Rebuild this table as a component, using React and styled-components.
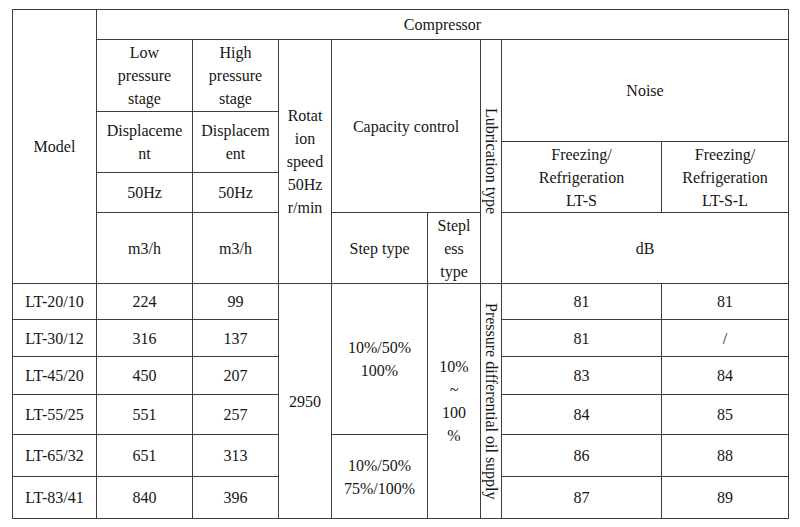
import React from 'react';
import styled, { createGlobalStyle } from 'styled-components';

// Estilo global: sem margem e fonte serifada com largura de Times
const GlobalStyle = createGlobalStyle`
  body {
    margin: 0;
    background: #ffffff;
    font-family: "Liberation Serif", "Times New Roman", serif;
    font-size: 16px;
    color: #161616;
  }
`;

// Dados das linhas do corpo da tabela
const modelos = [
  { nome: 'LT-20/10', baixa: '224', alta: '99', lts: '81', ltsl: '81' },
  { nome: 'LT-30/12', baixa: '316', alta: '137', lts: '81', ltsl: '/' },
  { nome: 'LT-45/20', baixa: '450', alta: '207', lts: '83', ltsl: '84' },
  { nome: 'LT-55/25', baixa: '551', alta: '257', lts: '84', ltsl: '85' },
  { nome: 'LT-65/32', baixa: '651', alta: '313', lts: '86', ltsl: '88' },
  { nome: 'LT-83/41', baixa: '840', alta: '396', lts: '87', ltsl: '89' },
];

const App = () => {
  return (
    <>
      <GlobalStyle />
      <Pagina>
        <Tabela>
          {/* Cabeçalho */}
          <Celula $col="1" $row="1 / 7">Model</Celula>
          <Celula $col="2 / 10" $row="1">Compressor</Celula>

          <Celula $col="2" $row="2">Low<br />pressure<br />stage</Celula>
          <Celula $col="3" $row="2">High<br />pressure<br />stage</Celula>
          <Celula $col="4" $row="2 / 7">Rotat<br />ion<br />speed<br />50Hz<br />r/min</Celula>
          <Celula $col="5 / 7" $row="2 / 6">Capacity control</Celula>
          <Celula $col="7" $row="2 / 7"><TextoVertical>Lubrication type</TextoVertical></Celula>
          <Celula $col="8 / 10" $row="2 / 4">Noise</Celula>

          <Celula $col="2" $row="3 / 5">Displaceme<br />nt</Celula>
          <Celula $col="3" $row="3 / 5">Displacem<br />ent</Celula>

          <Celula $col="8" $row="4 / 6">Freezing/<br />Refrigeration<br />LT-S</Celula>
          <Celula $col="9" $row="4 / 6">Freezing/<br />Refrigeration<br />LT-S-L</Celula>

          <Celula $col="2" $row="5">50Hz</Celula>
          <Celula $col="3" $row="5">50Hz</Celula>

          <Celula $col="2" $row="6">m3/h</Celula>
          <Celula $col="3" $row="6">m3/h</Celula>
          <Celula $col="5" $row="6">Step type</Celula>
          <Celula $col="6" $row="6">Stepl<br />ess<br />type</Celula>
          <Celula $col="8 / 10" $row="6">dB</Celula>

          {/* Corpo: uma linha por modelo */}
          {modelos.map((m, i) => (
            <React.Fragment key={m.nome}>
              <Celula $col="1" $row={`${7 + i}`}>{m.nome}</Celula>
              <Celula $col="2" $row={`${7 + i}`}>{m.baixa}</Celula>
              <Celula $col="3" $row={`${7 + i}`}>{m.alta}</Celula>
              <Celula $col="8" $row={`${7 + i}`}>{m.lts}</Celula>
              <Celula $col="9" $row={`${7 + i}`}>{m.ltsl}</Celula>
            </React.Fragment>
          ))}

          {/* Células mescladas do corpo */}
          <Celula $col="4" $row="7 / 13">2950</Celula>
          <Celula $col="5" $row="7 / 11">10%/50%<br />100%</Celula>
          <Celula $col="5" $row="11 / 13">10%/50%<br />75%/100%</Celula>
          <Celula $col="6" $row="7 / 13">10%<br />~<br />100<br />%</Celula>
          <Celula $col="7" $row="7 / 13"><TextoVertical>Pressure differential oil supply</TextoVertical></Celula>
        </Tabela>
      </Pagina>
    </>
  );
};

/* Estilos */

const Pagina = styled.div`
  padding: 9px 0 0 12px;
`;

// Grade com fundo escuro: o gap de 1px vira as linhas da tabela
const Tabela = styled.div`
  display: inline-grid;
  grid-template-columns: 83px 95px 85px 52px 95px 52px 20px 159px 126px;
  grid-template-rows: 29px 71px 29px 30px 39px 70px 35px 36px 37px 39px 41px 41px;
  gap: 1px;
  padding: 1px;
  background: #3d3d3d;
`;

const Celula = styled.div`
  grid-column: ${(p) => p.$col};
  grid-row: ${(p) => p.$row};
  background: #ffffff;
  display: flex;
  align-items: center;
  justify-content: center;
  text-align: center;
  line-height: 23px;
  white-space: nowrap;
  overflow: hidden;
`;

const TextoVertical = styled.span`
  writing-mode: vertical-rl;
  line-height: 20px;
`;

export default App;
